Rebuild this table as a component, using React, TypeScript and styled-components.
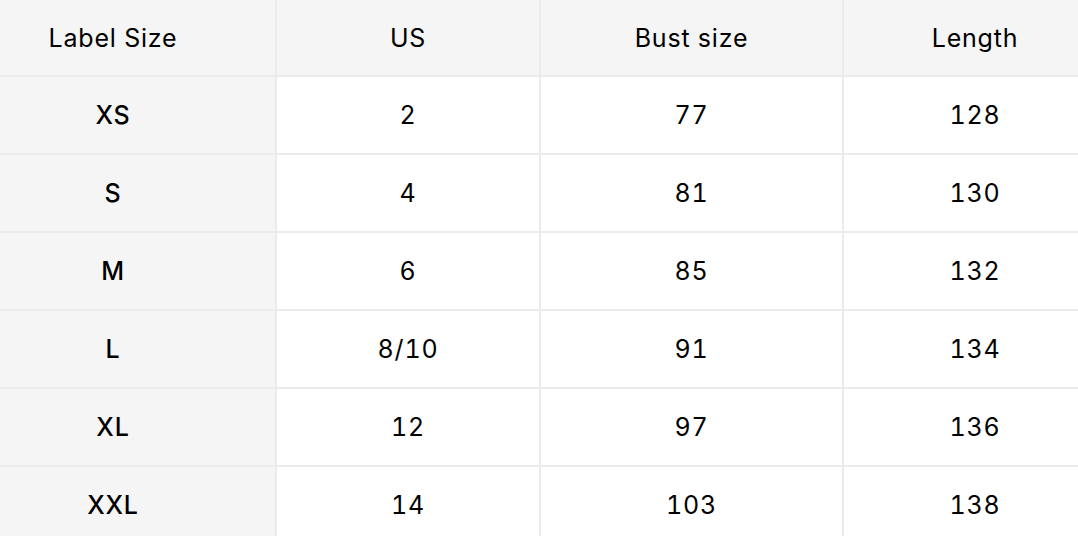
import React from "react";
import styled, { createGlobalStyle } from "styled-components";

const Global = createGlobalStyle`
  html, body { margin: 0; padding: 0; background: #ffffff; }
  body { font-family: Inter, "Noto Sans", "Liberation Sans", sans-serif; }
`;

const Grid = styled.div`
  display: grid;
  grid-template-columns: 275px 262px 301px 1fr;
  grid-template-rows: 75px repeat(6, 76px);
  gap: 2px;
  background: #ebebeb;
  width: 1078px;
  height: 536px;
  overflow: hidden;
`;

const Cell = styled.div<{ $shade?: boolean; $strong?: boolean; $edge?: "first" | "last" }>`
  display: flex;
  align-items: center;
  justify-content: center;
  padding-right: ${(p) => (p.$edge === "first" ? "49px" : "0")};
  padding-left: ${(p) => (p.$edge === "last" ? "28px" : "0")};
  background: ${(p) => (p.$shade ? "#f5f5f5" : "#ffffff")};
  color: #000000;
  font-size: 25px;
  font-weight: ${(p) => (p.$strong ? 500 : 400)};
  letter-spacing: 0.8px;
  font-variant-numeric: tabular-nums;
`;

const headers = ["Label Size", "US", "Bust size", "Length"];
const rows = [
  ["XS", "2", "77", "128"],
  ["S", "4", "81", "130"],
  ["M", "6", "85", "132"],
  ["L", "8/10", "91", "134"],
  ["XL", "12", "97", "136"],
  ["XXL", "14", "103", "138"],
];

const edgeOf = (i: number) => (i === 0 ? "first" : i === 3 ? "last" : undefined);

export default function App() {
  return (
    <>
      <Global />
      <Grid>
        {headers.map((h, i) => (
          <Cell key={h} $shade $edge={edgeOf(i)}>
            {h}
          </Cell>
        ))}
        {rows.map((r) =>
          r.map((v, i) => (
            <Cell key={r[0] + i} $shade={i === 0} $strong={i === 0} $edge={edgeOf(i)}>
              {v}
            </Cell>
          ))
        )}
      </Grid>
    </>
  );
}
